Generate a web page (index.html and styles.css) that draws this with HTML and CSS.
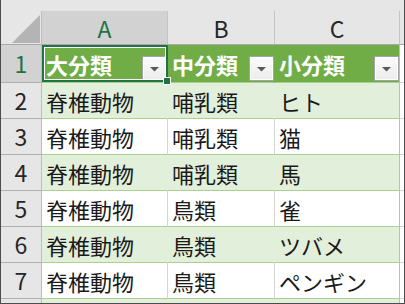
FILE: index.html
```html
<!DOCTYPE html>
<html lang="ja">
<head>
<meta charset="utf-8">
<link rel="stylesheet" href="styles.css">
</head>
<body>
<div class="sheet">
  <div class="topstrip"></div>

  <div class="corner"><svg width="40" height="33" viewBox="0 0 40 33"><polygon points="11,32 39,4 39,32" fill="#b4b4b4"/></svg></div>
  <div class="colhdr sel">A</div>
  <div class="colhdr">B</div>
  <div class="colhdr">C</div>
  <div class="colhdr pad"></div>

  <div class="rowhdr sel">1</div>
  <div class="cell th">大分類<span class="filter"><svg width="9" height="5" viewBox="0 0 9 5"><polygon points="0,0 9,0 4.5,4.5" fill="#595959"/></svg></span></div>
  <div class="cell th">中分類<span class="filter"><svg width="9" height="5" viewBox="0 0 9 5"><polygon points="0,0 9,0 4.5,4.5" fill="#595959"/></svg></span></div>
  <div class="cell th last">小分類<span class="filter"><svg width="9" height="5" viewBox="0 0 9 5"><polygon points="0,0 9,0 4.5,4.5" fill="#595959"/></svg></span></div>
  <div class="cell pad"></div>

  <div class="rowhdr">2</div>
  <div class="cell band">脊椎動物</div>
  <div class="cell band">哺乳類</div>
  <div class="cell band last">ヒト</div>
  <div class="cell pad"></div>

  <div class="rowhdr">3</div>
  <div class="cell">脊椎動物</div>
  <div class="cell">哺乳類</div>
  <div class="cell last">猫</div>
  <div class="cell pad"></div>

  <div class="rowhdr">4</div>
  <div class="cell band">脊椎動物</div>
  <div class="cell band">哺乳類</div>
  <div class="cell band last">馬</div>
  <div class="cell pad"></div>

  <div class="rowhdr">5</div>
  <div class="cell">脊椎動物</div>
  <div class="cell">鳥類</div>
  <div class="cell last">雀</div>
  <div class="cell pad"></div>

  <div class="rowhdr">6</div>
  <div class="cell band">脊椎動物</div>
  <div class="cell band">鳥類</div>
  <div class="cell band last">ツバメ</div>
  <div class="cell pad"></div>

  <div class="rowhdr">7</div>
  <div class="cell">脊椎動物</div>
  <div class="cell">鳥類</div>
  <div class="cell last">ペンギン</div>
  <div class="cell pad"></div>

  <div class="rowhdr end"></div>
  <div class="cell band end"></div>
  <div class="cell band end"></div>
  <div class="cell band last end"></div>
  <div class="cell pad end"></div>

  <div class="selection"><span class="handle"></span></div>
</div>
</body>
</html>
```

FILE: styles.css
```css
html, body {
  margin: 0;
  padding: 0;
  background: #ffffff;
}

.sheet {
  position: relative;
  box-sizing: border-box;
  width: 405px;
  height: 304px;
  border-left: 1px solid #4d4d4d;
  border-right: 1px solid #4d4d4d;
  border-bottom: 1px solid #4d4d4d;
  display: grid;
  grid-template-columns: 41px 126px 107px 125px 4px;
  grid-template-rows: 11px 34px 38px repeat(6, 36px) 4px;
  font-family: "Noto Sans CJK JP", "Noto Sans", sans-serif;
  font-size: 22px;
  color: #1a1a1a;
  overflow: hidden;
}

.sheet > div {
  box-sizing: border-box;
}

.topstrip {
  grid-column: 1 / -1;
  background: #e6e6e6;
}

.corner {
  background: #e6e6e6;
  border-right: 1px solid #bdbdbd;
  border-bottom: 1px solid #a8a8a8;
}

.corner svg {
  display: block;
}

.colhdr {
  background: #e6e6e6;
  border-right: 1px solid #c4c4c4;
  border-bottom: 1px solid #a8a8a8;
  display: flex;
  align-items: center;
  justify-content: center;
  line-height: 1;
  font-size: 23px;
  color: #262626;
  padding-top: 1px;
}

.colhdr.pad {
  border-right: none;
}

.colhdr.sel {
  background: #d2d2d2;
  color: #217346;
}

.rowhdr {
  background: #e6e6e6;
  border-right: 1px solid #bdbdbd;
  border-bottom: 1px solid #b0b0b0;
  display: flex;
  align-items: center;
  justify-content: center;
  line-height: 1;
  font-size: 23px;
  color: #262626;
}

.rowhdr.sel {
  background: #d2d2d2;
  color: #217346;
}

.rowhdr.end {
  border-bottom: none;
}

.cell {
  background: #ffffff;
  border-right: 1px solid #d4d4d4;
  border-bottom: 1px solid #a9d08e;
  display: flex;
  align-items: center;
  padding-left: 4px;
  line-height: 1;
  white-space: nowrap;
}

.cell.band {
  background: #e2efda;
  border-right-color: #e2efda;
}

.cell.last {
  border-right: 1px solid #a9d08e;
}

.cell.pad {
  background: #ffffff;
  border-right: none;
  border-bottom: 1px solid #d4d4d4;
  padding: 0;
}

.cell.end {
  border-bottom: none;
}

.cell.th {
  background: #70ad47;
  border-right-color: #70ad47;
  border-bottom-color: #a9d08e;
  color: #ffffff;
  font-weight: bold;
  justify-content: space-between;
  padding-right: 0;
}

.cell.th.last {
  border-right-color: #a9d08e;
}

.filter {
  box-sizing: border-box;
  align-self: flex-end;
  margin-bottom: 1px;
  width: 25px;
  height: 25px;
  border: 1px solid #a3a3a3;
  background: linear-gradient(#fbfbfb, #ececec);
  box-shadow: inset 0 0 0 1px #ffffff;
  display: flex;
  align-items: center;
  justify-content: center;
}

.filter svg {
  display: block;
  margin-top: 1px;
}

.selection {
  position: absolute;
  left: 41px;
  top: 45px;
  width: 126px;
  height: 37px;
  box-sizing: border-box;
  border: 2px solid #217346;
  box-shadow: inset 0 0 0 1px #ffffff;
  pointer-events: none;
}

.handle {
  position: absolute;
  right: -5px;
  bottom: -5px;
  width: 6px;
  height: 6px;
  background: #217346;
  border: 1px solid #ffffff;
}
```
